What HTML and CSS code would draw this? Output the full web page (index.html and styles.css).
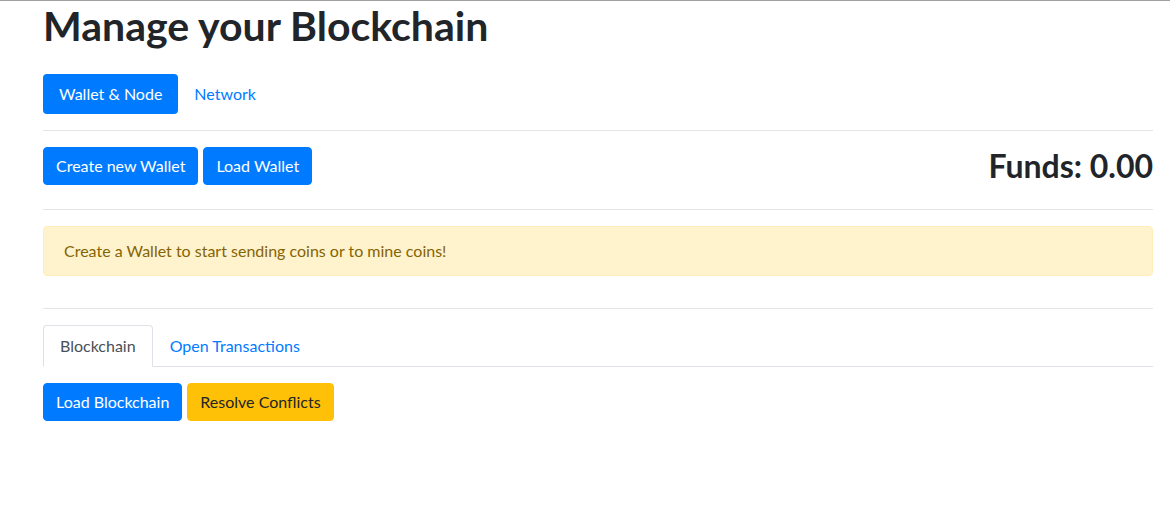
FILE: index.html
```html
<!DOCTYPE html>
<html lang="en">
<head>
<meta charset="utf-8">
<title>Manage your Blockchain</title>
<link rel="stylesheet" href="styles.css">
</head>
<body>
<div class="topline"></div>
<div class="page">
  <h1 class="title">Manage your Blockchain</h1>
  <nav class="pills">
    <a class="pill active">Wallet &amp; Node</a>
    <a class="pill">Network</a>
  </nav>
  <hr class="rule">
  <div class="wallet-row">
    <div class="btn-group">
      <button class="btn btn-primary">Create new Wallet</button>
      <button class="btn btn-primary">Load Wallet</button>
    </div>
    <h2 class="funds">Funds: 0.00</h2>
  </div>
  <hr class="rule">
  <div class="alert">Create a Wallet to start sending coins or to mine coins!</div>
  <hr class="rule rule-wide">
  <nav class="tabs">
    <a class="tab active">Blockchain</a>
    <a class="tab">Open Transactions</a>
  </nav>
  <div class="btn-group chain-actions">
    <button class="btn btn-primary">Load Blockchain</button>
    <button class="btn btn-warning">Resolve Conflicts</button>
  </div>
</div>
</body>
</html>
```

FILE: styles.css
```css
* { box-sizing: border-box; }
html, body { margin: 0; padding: 0; background: #fff; }
body {
  font-family: "Segoe UI", Lato, "Noto Sans", sans-serif;
  font-size: 16px;
  line-height: 24px;
  color: #212529;
}
.topline { height: 1px; background: #a0a0a0; }
.page {
  width: 1110px;
  margin-left: 43px;
  padding-top: 1px;
}
.title {
  margin: 0 0 24px;
  font-size: 41px;
  line-height: 48px;
  font-weight: 700;
}
.pills { display: flex; }
.pill {
  padding: 8px 16px;
  border-radius: 4px;
  color: #007bff;
  line-height: 24px;
}
.pill.active { background: #007bff; color: #fff; }
.rule {
  margin: 16px 0;
  border: 0;
  border-top: 1px solid rgba(0,0,0,.1);
}
.rule-wide { margin-top: 32px; }
.wallet-row {
  display: flex;
  justify-content: space-between;
  align-items: flex-start;
}
.btn-group { display: flex; gap: 5px; }
.btn {
  font-family: inherit;
  font-size: 16px;
  line-height: 24px;
  padding: 6px 12px;
  border: 1px solid transparent;
  border-radius: 4px;
  cursor: pointer;
}
.btn-primary { background: #007bff; border-color: #007bff; color: #fff; }
.btn-warning { background: #ffc107; border-color: #ffc107; color: #212529; }
.funds {
  margin: 0 0 8px;
  font-size: 32px;
  line-height: 38px;
  font-weight: 700;
}
.alert {
  padding: 12px 20px;
  border: 1px solid #ffeeba;
  border-radius: 4px;
  background: #fff3cd;
  color: #856404;
  line-height: 24px;
}
.tabs {
  display: flex;
  border-bottom: 1px solid #dee2e6;
}
.tab {
  padding: 8px 16px;
  border: 1px solid transparent;
  border-top-left-radius: 4px;
  border-top-right-radius: 4px;
  margin-bottom: -1px;
  color: #007bff;
}
.tab.active {
  color: #495057;
  background: #fff;
  border-color: #dee2e6 #dee2e6 #fff;
}
.chain-actions { margin-top: 16px; }
```
